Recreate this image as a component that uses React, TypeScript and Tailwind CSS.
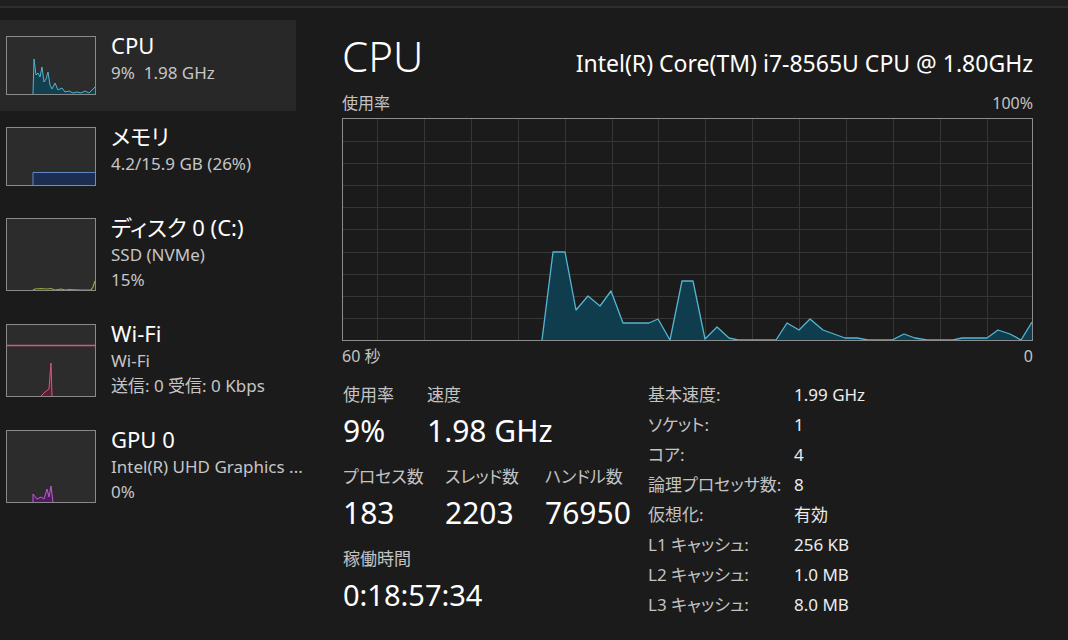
import React from 'react';

interface SideItem {
    title: string;
    lines: string[];
    tall: boolean;
    selected?: boolean;
    chart: React.ReactNode;
}

const cpuLine = '0,57 26,57 27,22 29,38 31,36 33,40 35,30 37,45 39,42 41,35 43,48 45,52 48,46 51,53 55,51 58,55 62,54 66,56 70,55 74,56 78,54 82,56 86,52 88,50';

const bigLine =
    '199,221 210,133 222,133 233,191 245,177 257,187 268,172 280,204 306,204 315,200 327,221 339,162 350,162 362,220 374,208 386,219 395,221 433,221 444,204 456,211 467,200 480,211 491,215 502,219 514,219 525,221 549,221 561,215 572,219 584,221 610,221 619,219 644,219 655,211 667,215 678,221 689,203';

const MiniCpu = () => (
    <svg className="w-full h-full block" viewBox="0 0 88 57" preserveAspectRatio="none">
        <polygon points={`${cpuLine} 88,57`} fill="#12404f" />
        <polyline points={cpuLine.replace('0,57 ', '')} fill="none" stroke="#4fb4d4" strokeWidth={1} />
    </svg>
);

const MiniMem = () => (
    <svg className="w-full h-full block" viewBox="0 0 88 57" preserveAspectRatio="none">
        <rect x={26} y={44} width={62} height={13} fill="#1b2d50" />
        <polyline points="26,57 26,44.5 88,44.5" fill="none" stroke="#6186c6" strokeWidth={1} />
    </svg>
);

const MiniDisk = () => (
    <svg className="w-full h-full block" viewBox="0 0 88 71" preserveAspectRatio="none">
        <polyline
            points="26,71 28,70 34,69.5 40,70 44,69.5 48,71 54,70 58,71 62,70.5 74,71 84,71 86,68 88,62"
            fill="none"
            stroke="#8fa93f"
            strokeWidth={1.2}
        />
    </svg>
);

const MiniWifi = () => (
    <svg className="w-full h-full block" viewBox="0 0 88 71" preserveAspectRatio="none">
        <line x1={0} y1={20.5} x2={88} y2={20.5} stroke="#d05a8a" strokeWidth={1.5} />
        <polygon points="34,71 38,67 42,64 44,38 45,71" fill="#5a1f36" />
        <polyline points="34,71 38,67 42,64 44,38 45,71" fill="none" stroke="#d4588b" strokeWidth={1} />
    </svg>
);

const MiniGpu = () => (
    <svg className="w-full h-full block" viewBox="0 0 88 71" preserveAspectRatio="none">
        <polygon points="26,71 26,63 30,68 34,66 37,68 40,58 42,66 44,55 46,71" fill="#4a1f5a" />
        <polyline points="26,71 26,63 30,68 34,66 37,68 40,58 42,66 44,55 46,71" fill="none" stroke="#c057d8" strokeWidth={1} />
    </svg>
);

const items: SideItem[] = [
    { title: 'CPU', lines: ['9%\u00a0 1.98 GHz'], tall: false, selected: true, chart: <MiniCpu /> },
    { title: 'メモリ', lines: ['4.2/15.9 GB (26%)'], tall: false, chart: <MiniMem /> },
    { title: 'ディスク 0 (C:)', lines: ['SSD (NVMe)', '15%'], tall: true, chart: <MiniDisk /> },
    { title: 'Wi-Fi', lines: ['Wi-Fi', '送信: 0 受信: 0 Kbps'], tall: true, chart: <MiniWifi /> },
    { title: 'GPU 0', lines: ['Intel(R) UHD Graphics ...', '0%'], tall: true, chart: <MiniGpu /> },
];

const specs: [string, string][] = [
    ['基本速度:', '1.99 GHz'],
    ['ソケット:', '1'],
    ['コア:', '4'],
    ['論理プロセッサ数:', '8'],
    ['仮想化:', '有効'],
    ['L1 キャッシュ:', '256 KB'],
    ['L2 キャッシュ:', '1.0 MB'],
    ['L3 キャッシュ:', '8.0 MB'],
];

const hLines = [22, 44, 66, 88, 110, 133, 155, 177, 199];
const vLines = Array.from({ length: 14 }, (_, i) => 34 + i * 46.9);

const BigChart = () => (
    <div className="w-[691px] h-[223px] border border-[#8c8c8c] bg-[#1b1b1b]">
        <svg className="w-full h-full block" viewBox="0 0 689 221" preserveAspectRatio="none">
            {hLines.map((y) => (
                <line key={'h' + y} x1={0} y1={y + 0.5} x2={689} y2={y + 0.5} stroke="#363636" strokeWidth={1} />
            ))}
            {vLines.map((x) => (
                <line key={'v' + x} x1={Math.round(x) + 0.5} y1={0} x2={Math.round(x) + 0.5} y2={221} stroke="#363636" strokeWidth={1} />
            ))}
            <polygon points={`${bigLine} 689,221`} fill="#0f3d4d" />
            <polyline points={bigLine} fill="none" stroke="#55b5d3" strokeWidth={1.3} strokeLinejoin="round" />
        </svg>
    </div>
);

const Stat = ({ label, value, w, big = 'text-[30px]' }: { label: string; value: string; w?: string; big?: string }) => (
    <div className={w}>
        <div className="text-[17px] leading-[20px] text-[#c3c3c3]">{label}</div>
        <div className={`mt-[9px] ${big} leading-[34px]`}>{value}</div>
    </div>
);

const App: React.FC = () => {
    return (
        <div className="w-[1068px] h-[640px] overflow-hidden bg-[#1b1b1b] text-white font-[family-name:'Noto_Sans','Noto_Sans_CJK_JP',sans-serif] [font-feature-settings:'palt'] flex flex-col">
            {/* 上部の帯 */}
            <div className="h-[8px] bg-[#1f1f1f] border-b-2 border-[#2e2e2e] shrink-0" />

            <div className="flex flex-1">
                {/* サイドバー */}
                <div className="w-[296px] pt-3 shrink-0">
                    {items.map((it) => (
                        <div
                            key={it.title}
                            className={`flex items-start gap-[15px] px-[6px] py-4 ${it.selected ? 'bg-[#282828]' : ''}`}
                        >
                            <div
                                className={`w-[90px] ${it.tall ? 'h-[73px]' : 'h-[59px]'} border border-[#8a8a8a] bg-[#2c2c2c] shrink-0`}
                            >
                                {it.chart}
                            </div>
                            <div className="-mt-[4px] whitespace-nowrap">
                                <div className="text-[22px] leading-[26px] text-white">{it.title}</div>
                                <div className="mt-[2px]">
                                    {it.lines.map((l) => (
                                        <div key={l} className="text-[17px] leading-[25px] text-[#c6c6c6]">
                                            {l}
                                        </div>
                                    ))}
                                </div>
                            </div>
                        </div>
                    ))}
                </div>

                {/* メイン */}
                <div className="flex-1 pl-[46px] pt-[22px]">
                    <div className="w-[691px]">
                        <div className="flex items-baseline justify-between">
                            <div className="text-[42px] leading-[52px] font-light">CPU</div>
                            <div className="text-[23px] leading-[28px] text-white">Intel(R) Core(TM) i7-8565U CPU @ 1.80GHz</div>
                        </div>

                        <div className="mt-3 flex justify-between text-[16px] leading-[18px] text-[#c3c3c3]">
                            <span>使用率</span>
                            <span>100%</span>
                        </div>

                        <div className="mt-[6px]">
                            <BigChart />
                        </div>

                        <div className="mt-[6px] flex justify-between text-[16px] leading-[18px] text-[#c3c3c3]">
                            <span>60 秒</span>
                            <span>0</span>
                        </div>

                        <div className="mt-[20px] flex">
                            {/* 左の数値 */}
                            <div className="w-[306px] pl-[1px] shrink-0">
                                <div className="flex">
                                    <Stat w="w-[84px]" label="使用率" value="9%" />
                                    <Stat label="速度" value="1.98 GHz" />
                                </div>

                                <div className="flex mt-[19px]">
                                    <Stat w="w-[102px]" label="プロセス数" value="183" />
                                    <Stat w="w-[100px]" label="スレッド数" value="2203" />
                                    <Stat label="ハンドル数" value="76950" />
                                </div>

                                <div className="mt-[19px]">
                                    <Stat label="稼働時間" value="0:18:57:34" big="text-[29px]" />
                                </div>
                            </div>

                            {/* 右の詳細 */}
                            <div className="-mt-[5px]">
                                {specs.map(([k, v]) => (
                                    <div key={k} className="flex text-[17px] leading-[30px]">
                                        <span className="w-[146px] text-[#c3c3c3]">{k}</span>
                                        <span className="text-[#ececec]">{v}</span>
                                    </div>
                                ))}
                            </div>
                        </div>
                    </div>
                </div>
            </div>
        </div>
    );
};

export default App;
